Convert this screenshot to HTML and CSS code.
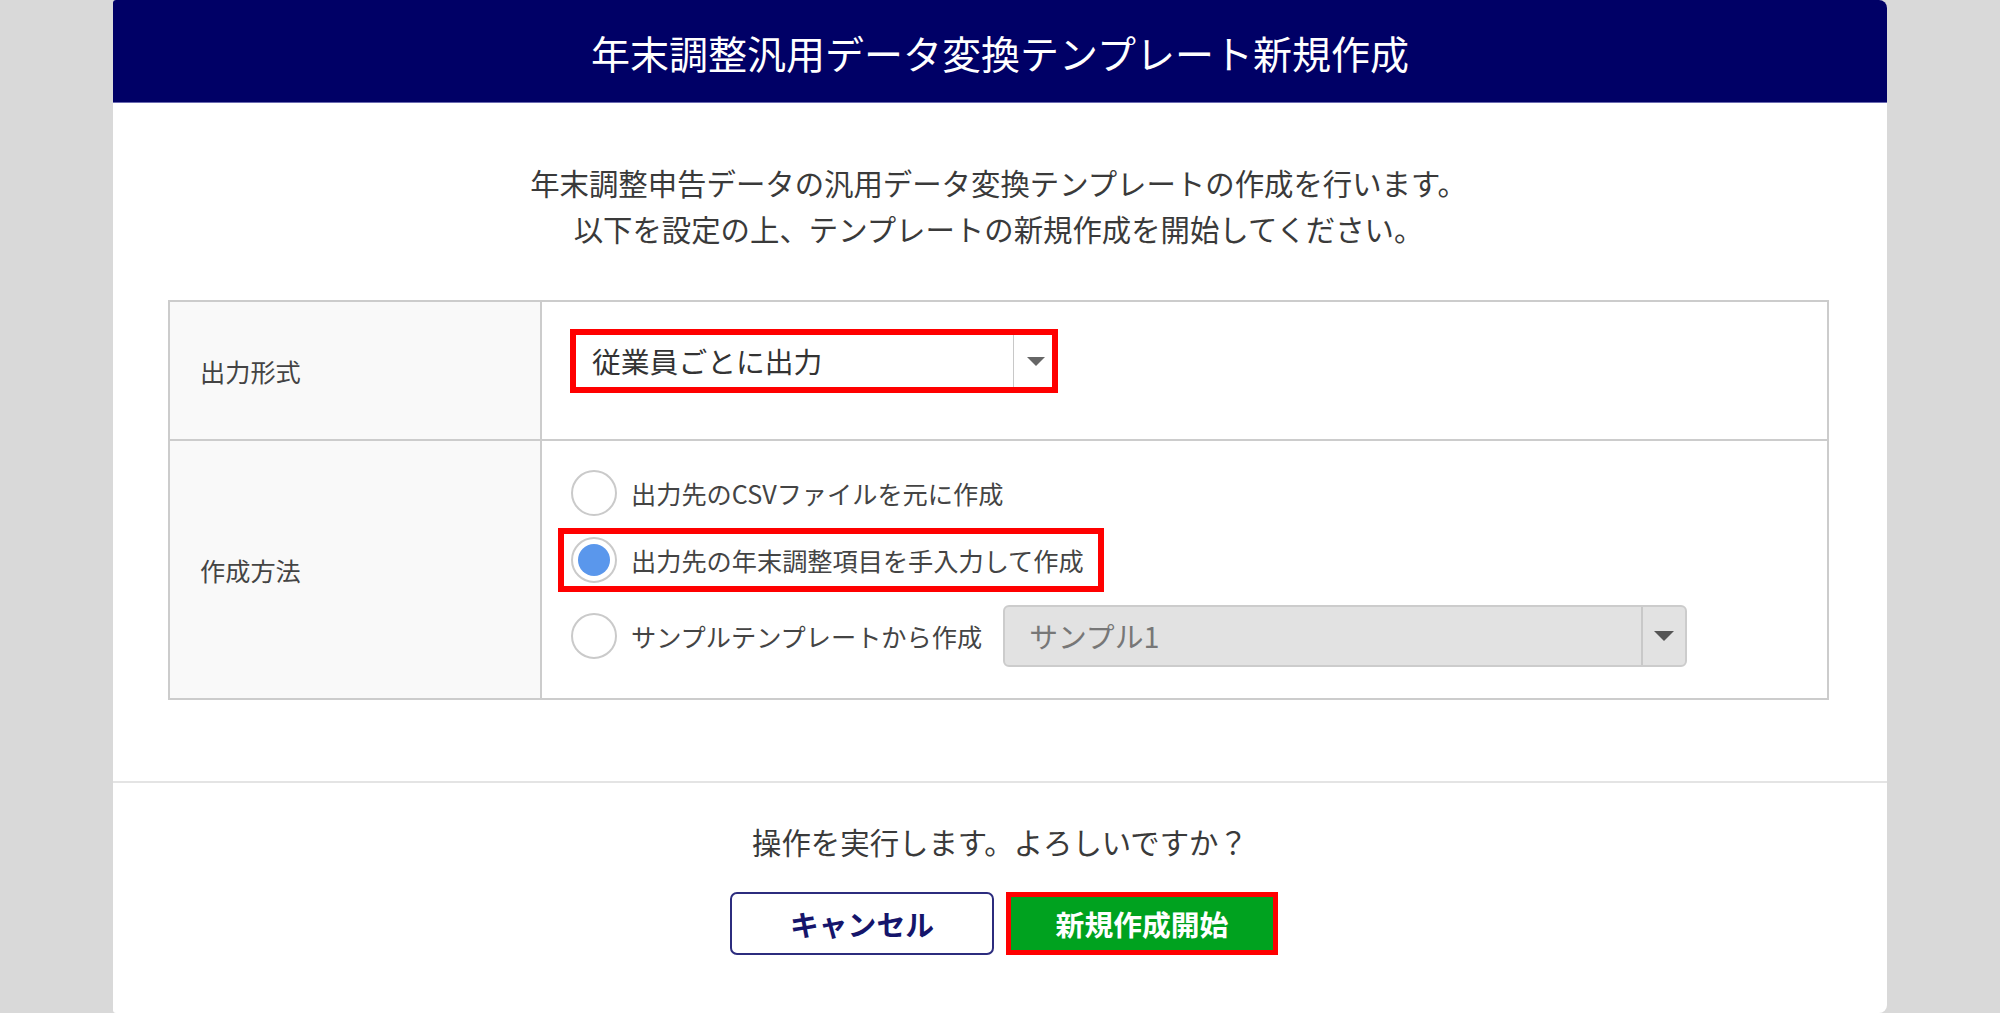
FILE: index.html
```html
<!DOCTYPE html>
<html lang="ja">
<head>
<meta charset="utf-8">
<title>年末調整汎用データ変換テンプレート新規作成</title>
<link rel="stylesheet" href="styles.css">
</head>
<body>
<div class="modal">
  <div class="modal-header">
    <h1 class="modal-title">年末調整汎用データ変換テンプレート新規作成</h1>
  </div>
  <div class="modal-body">
    <p class="lead">年末調整申告データの汎用データ変換テンプレートの作成を行います。<br>以下を設定の上、テンプレートの新規作成を開始してください。</p>
    <div class="form-grid">
      <div class="label-cell row-first">出力形式</div>
      <div class="value-cell row-first cell-format">
        <div class="select select-format">
          <span class="select-text">従業員ごとに出力</span>
          <span class="select-arrow"><span class="tri"></span></span>
        </div>
      </div>
      <div class="label-cell">作成方法</div>
      <div class="value-cell cell-method">
        <div class="radio-item">
          <span class="radio"></span>
          <span class="radio-label">出力先のCSVファイルを元に作成</span>
        </div>
        <div class="radio-item marked">
          <span class="radio checked"><span class="dot"></span></span>
          <span class="radio-label">出力先の年末調整項目を手入力して作成</span>
        </div>
        <div class="radio-item">
          <span class="radio"></span>
          <span class="radio-label">サンプルテンプレートから作成</span>
          <div class="select select-sample">
            <span class="select-text">サンプル1</span>
            <span class="select-arrow"><span class="tri tri-dark"></span></span>
          </div>
        </div>
      </div>
    </div>
  </div>
  <div class="modal-footer">
    <p class="confirm">操作を実行します。よろしいですか？</p>
    <div class="actions">
      <button class="btn btn-cancel">キャンセル</button>
      <button class="btn btn-primary">新規作成開始</button>
    </div>
  </div>
</div>
</body>
</html>
```
FILE: styles.css
```css
* { box-sizing: border-box; }
html, body {
  margin: 0;
  padding: 0;
  width: 2000px;
  height: 1013px;
  overflow: hidden;
  background: #d9d9d9;
  font-family: "Noto Sans CJK JP", "Noto Sans", sans-serif;
}
.modal {
  width: 1774px;
  height: 1013px;
  margin-left: 113px;
  background: #ffffff;
  border-radius: 3px 8px 8px 3px;
  overflow: hidden;
}
.modal-header {
  height: 103px;
  background: #000066;
  border-bottom: 1px solid #6a6ab0;
  display: flex;
  align-items: center;
  justify-content: center;
}
.modal-title {
  margin: 0;
  color: #ffffff;
  font-size: 39px;
  font-weight: 400;
  line-height: 1;
  padding-top: 2px;
}
.modal-body {
  padding: 56px 58px 81px 55px;
}
.lead {
  margin: 0 0 49px;
  text-align: center;
  font-size: 29.4px;
  line-height: 46px;
  color: #3a3a3a;
}
.form-grid {
  display: grid;
  grid-template-columns: 372px 1fr;
  border: 2px solid #cccccc;
}
.label-cell {
  background: #f9f9f9;
  border-right: 2px solid #cccccc;
  display: flex;
  align-items: center;
  padding-left: 30px;
  font-size: 25.2px;
  color: #444444;
}
.row-first {
  border-bottom: 2px solid #cccccc;
}
.cell-format {
  padding: 27px 28px 46px 28px;
}
.select {
  display: flex;
  align-items: center;
  background: #ffffff;
}
.select-format {
  width: 488px;
  height: 64px;
  border: 6px solid #ff0000;
}
.select-format .select-text {
  flex: 1;
  padding-left: 16px;
  font-size: 28.8px;
  color: #333333;
  line-height: 1;
}
.select-format .select-arrow {
  width: 39px;
  height: 100%;
  border-left: 1px solid #c8c8c8;
  display: flex;
  align-items: center;
  justify-content: center;
  padding-left: 6px;
}
.tri {
  width: 0;
  height: 0;
  border-left: 9px solid transparent;
  border-right: 9px solid transparent;
  border-top: 9px solid #666666;
}
.tri-dark {
  border-left-width: 10px;
  border-right-width: 10px;
  border-top: 10px solid #555555;
}
.cell-method {
  padding: 29px 20px 31px 29px;
  display: flex;
  flex-direction: column;
  align-items: flex-start;
}
.radio-item {
  display: flex;
  align-items: center;
}
.radio-item + .radio-item {
  margin-top: 12px;
}
.radio-item:last-child {
  margin-top: 13px;
}
.radio-item.marked {
  border: 6px solid #ff0000;
  height: 64px;
  margin-left: -13px;
  padding: 0 14px 0 7px;
}
.radio {
  width: 46px;
  height: 46px;
  flex: none;
  border: 2px solid #cacaca;
  border-radius: 50%;
  background: #ffffff;
  display: flex;
  align-items: center;
  justify-content: center;
}
.dot {
  width: 32px;
  height: 32px;
  border-radius: 50%;
  background: #5a97ec;
}
.radio-label {
  margin-left: 14px;
  font-size: 25.2px;
  color: #444444;
  line-height: 1.2;
}
.select-sample {
  margin-left: 21px;
  width: 684px;
  height: 62px;
  background: #e2e2e2;
  border: 2px solid #cccccc;
  border-radius: 6px;
}
.select-sample .select-text {
  flex: 1;
  padding-left: 24px;
  font-size: 28.8px;
  color: #777777;
  line-height: 1;
}
.select-sample .select-arrow {
  width: 44px;
  height: 100%;
  border-left: 2px solid #c8c8c8;
  display: flex;
  align-items: center;
  justify-content: center;
}
.modal-footer {
  border-top: 2px solid #e4e4e4;
  padding-top: 35px;
  text-align: center;
}
.confirm {
  margin: 0;
  font-size: 29.4px;
  line-height: 46px;
  color: #3a3a3a;
}
.actions {
  margin-top: 28px;
  display: flex;
  justify-content: center;
  gap: 12px;
  padding-left: 8px;
}
.btn {
  height: 63px;
  font-family: "Noto Sans CJK JP", "Noto Sans", sans-serif;
  font-size: 28.8px;
  font-weight: 700;
  cursor: pointer;
  padding: 0;
}
.btn-cancel {
  width: 264px;
  background: #ffffff;
  color: #15156b;
  border: 2px solid #2c2c7e;
  border-radius: 7px;
}
.btn-primary {
  width: 272px;
  background: #00a21f;
  color: #ffffff;
  border: 5px solid #ff0000;
  border-radius: 0;
}
```
